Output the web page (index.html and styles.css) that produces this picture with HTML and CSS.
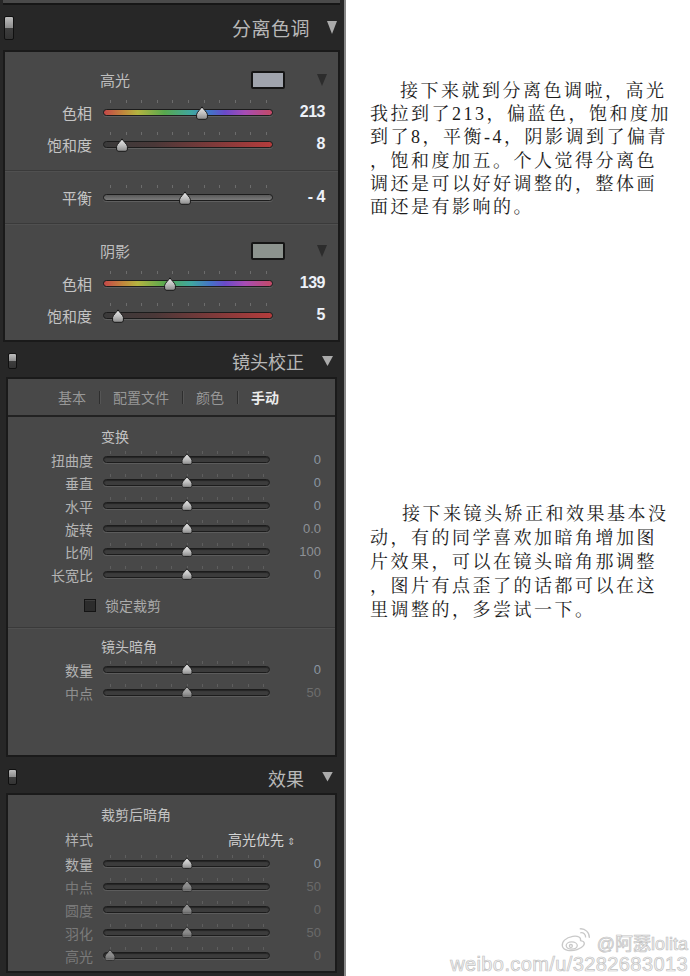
FILE: index.html
```html
<!DOCTYPE html>
<html lang="zh-CN">
<head>
<meta charset="utf-8">
<title>分离色调 / 镜头校正 / 效果</title>
<link rel="stylesheet" href="styles.css">
</head>
<body>
<svg class="defs" width="0" height="0" aria-hidden="true">
  <defs>
    <linearGradient id="tg" x1="0" y1="0" x2="0" y2="1">
      <stop offset="0" stop-color="#ececec"/>
      <stop offset="0.55" stop-color="#bdbdbd"/>
      <stop offset="1" stop-color="#8a8a8a"/>
    </linearGradient>
    <symbol id="th" viewBox="0 0 12 14" preserveAspectRatio="none">
      <path d="M6 0.8 C6.8 2.6 11.2 6.4 11.4 8.4 L11.4 11 C11.4 12.6 10.4 13.3 9 13.3 L3 13.3 C1.6 13.3 0.6 12.6 0.6 11 L0.6 8.4 C0.8 6.4 5.2 2.6 6 0.8 Z" fill="url(#tg)" stroke="#181818" stroke-width="1"/>
    </symbol>
  </defs>
</svg>
<div class="page">
  <aside class="lr">
    <div class="prev"></div>

    <header class="hd hd1"><span class="tog"></span><h2 class="ttl">分离色调</h2><span class="tri"></span></header>
    <div class="pnl p1">
      <div class="sub sa">
        <div class="grp"><span class="gname">高光</span><span class="swatch sw-hi"></span><span class="dtri"></span></div>
        <div class="row r1 first"><span class="lab">色相</span><div class="slider hue hue-hi"><svg class="thumb" style="--p:.592"><use href="#th"/></svg></div><span class="val">213</span></div>
        <div class="row r1"><span class="lab">饱和度</span><div class="slider sat"><svg class="thumb" style="--p:.08"><use href="#th"/></svg></div><span class="val">8</span></div>
      </div>
      <div class="sub sb">
        <div class="row r1"><span class="lab">平衡</span><div class="slider bal"><svg class="thumb" style="--p:.48"><use href="#th"/></svg></div><span class="val">- 4</span></div>
      </div>
      <div class="sub sc">
        <div class="grp"><span class="gname">阴影</span><span class="swatch sw-sh"></span><span class="dtri"></span></div>
        <div class="row r1 first"><span class="lab">色相</span><div class="slider hue"><svg class="thumb" style="--p:.386"><use href="#th"/></svg></div><span class="val">139</span></div>
        <div class="row r1"><span class="lab">饱和度</span><div class="slider sat"><svg class="thumb" style="--p:.05"><use href="#th"/></svg></div><span class="val">5</span></div>
      </div>
    </div>

    <header class="hd hd2"><span class="tog sm"></span><h2 class="ttl">镜头校正</h2><span class="tri sm"></span></header>
    <div class="pnl p2">
      <nav class="tabs">
        <span class="tab">基本</span><span class="sep"></span>
        <span class="tab">配置文件</span><span class="sep"></span>
        <span class="tab">颜色</span><span class="sep"></span>
        <span class="tab on">手动</span>
      </nav>
      <div class="sub st">
        <div class="sh">变换</div>
        <div class="row r2"><span class="lab">扭曲度</span><div class="slider g"><svg class="thumb" style="--p:.5"><use href="#th"/></svg></div><span class="val">0</span></div>
        <div class="row r2"><span class="lab">垂直</span><div class="slider g"><svg class="thumb" style="--p:.5"><use href="#th"/></svg></div><span class="val">0</span></div>
        <div class="row r2"><span class="lab">水平</span><div class="slider g"><svg class="thumb" style="--p:.5"><use href="#th"/></svg></div><span class="val">0</span></div>
        <div class="row r2"><span class="lab">旋转</span><div class="slider g"><svg class="thumb" style="--p:.5"><use href="#th"/></svg></div><span class="val grey">0.0</span></div>
        <div class="row r2"><span class="lab">比例</span><div class="slider g"><svg class="thumb" style="--p:.5"><use href="#th"/></svg></div><span class="val grey">100</span></div>
        <div class="row r2"><span class="lab">长宽比</span><div class="slider g"><svg class="thumb" style="--p:.5"><use href="#th"/></svg></div><span class="val">0</span></div>
        <label class="chk"><span class="box"></span><span class="ctext">锁定裁剪</span></label>
      </div>
      <div class="sub sv">
        <div class="sh">镜头暗角</div>
        <div class="row r2"><span class="lab">数量</span><div class="slider g"><svg class="thumb" style="--p:.5"><use href="#th"/></svg></div><span class="val">0</span></div>
        <div class="row r2 dim"><span class="lab">中点</span><div class="slider g"><svg class="thumb" style="--p:.5"><use href="#th"/></svg></div><span class="val">50</span></div>
      </div>
    </div>

    <header class="hd hd3"><span class="tog sm"></span><h2 class="ttl">效果</h2><span class="tri sm"></span></header>
    <div class="pnl p3">
      <div class="sub se">
        <div class="sh">裁剪后暗角</div>
        <div class="row r2 style"><span class="lab">样式</span><span class="pick">高光优先 <span class="upd">&#8661;</span></span></div>
        <div class="row r2"><span class="lab">数量</span><div class="slider g"><svg class="thumb" style="--p:.5"><use href="#th"/></svg></div><span class="val">0</span></div>
        <div class="row r2 off"><span class="lab">中点</span><div class="slider g"><svg class="thumb" style="--p:.5"><use href="#th"/></svg></div><span class="val">50</span></div>
        <div class="row r2 off"><span class="lab">圆度</span><div class="slider g"><svg class="thumb" style="--p:.5"><use href="#th"/></svg></div><span class="val">0</span></div>
        <div class="row r2 off"><span class="lab">羽化</span><div class="slider g"><svg class="thumb" style="--p:.5"><use href="#th"/></svg></div><span class="val">50</span></div>
        <div class="row r2 off"><span class="lab">高光</span><div class="slider g"><svg class="thumb" style="--p:0"><use href="#th"/></svg></div><span class="val">0</span></div>
      </div>
    </div>
  </aside>

  <main class="notes">
    <p class="note n1">
      <span class="ln">接下来就到分离色调啦，高光</span>
      <span class="ln">我拉到了213，偏蓝色，饱和度加</span>
      <span class="ln">到了8，平衡-4，阴影调到了偏青</span>
      <span class="ln">，饱和度加五。个人觉得分离色</span>
      <span class="ln">调还是可以好好调整的，整体画</span>
      <span class="ln">面还是有影响的。</span>
    </p>
    <p class="note n2">
      <span class="ln">接下来镜头矫正和效果基本没</span>
      <span class="ln">动，有的同学喜欢加暗角增加图</span>
      <span class="ln">片效果，可以在镜头暗角那调整</span>
      <span class="ln">，图片有点歪了的话都可以在这</span>
      <span class="ln">里调整的，多尝试一下。</span>
    </p>
    <div class="wm">
      <div class="wm1">
        <svg class="wb" viewBox="0 0 30 25" width="32" height="27">
          <g fill="none" stroke="#c9c9c9" stroke-width="1.2">
            <path d="M12 9.5 C5 10.5 1.5 15 2.2 18.8 C3 22.8 10 24 16 22 C22 20 24 16.5 22 14.5 C21 13.6 19.4 13.8 19.2 13.4 C20 10.5 17 8.8 12 9.5Z"/>
            <ellipse cx="11" cy="18.2" rx="5.2" ry="3.4"/>
            <circle cx="10.2" cy="18.6" r="1.4"/>
            <path d="M18.5 2.5 A8 8 0 0 1 27.5 11"/>
            <path d="M19 6.2 A4 4 0 0 1 24 10.6"/>
          </g>
        </svg>
        <span>@阿瑟lolita</span>
      </div>
      <div class="wm2">weibo.com/u/3282683013</div>
    </div>
  </main>
</div>
</body>
</html>
```

FILE: styles.css
```css
* { box-sizing: border-box; margin: 0; padding: 0; }

html, body { width: 690px; height: 976px; overflow: hidden; }
body {
  background: #ffffff;
  font-family: "Noto Sans CJK SC", "Noto Sans", sans-serif;
}

.defs { position: absolute; width: 0; height: 0; overflow: hidden; }

.page { display: flex; height: 976px; }

/* ---------- left: Lightroom panel ---------- */
.lr {
  width: 346px;
  flex: none;
  background: #272727;
  border-right: 2px solid #888888;
  display: flex;
  flex-direction: column;
  overflow: hidden;
}

.prev {
  flex: none;
  height: 5px;
  margin: 0 4px 0 3px;
  background: #4a4a4a;
  border-bottom: 2px solid #161616;
}

.hd { display: flex; align-items: center; flex: none; }
.hd1 { height: 45px; padding: 0 7px 0 4px; }
.hd2 { height: 35px; padding: 3px 11px 0 8px; }
.hd3 { height: 36px; padding: 3px 11px 0 8px; }

.tog {
  width: 10px;
  height: 24px;
  border: 1px solid #101010;
  border-radius: 2px;
  background: linear-gradient(#bdbdbd, #8c8c8c 50%, #3e3e3e 50%, #333333);
}
.tog.sm { width: 9px; height: 16px; }

.ttl {
  margin-left: auto;
  font-weight: 400;
  color: #b7b7b7;
  font-size: 18px;
  line-height: 1;
  margin-right: 18px;
}
.hd1 .ttl { font-size: 19px; margin-right: 17px; letter-spacing: 0.5px; }
.hd3 .ttl { padding-top: 3px; }

.tri {
  width: 10px;
  height: 13px;
  background: #ababab;
  clip-path: polygon(0 0, 100% 0, 50% 100%);
}
.tri.sm { width: 11px; height: 10px; }

.pnl {
  flex: none;
  border: 2px solid #1a1a1a;
  background: #484848;
}
.p1 { margin: 0 4px 0 3px; }
.p2 {
  margin: 0 7px 0 6px;
  height: 380px;
  display: flex;
  flex-direction: column;
}
.p3 { margin: 0 7px 0 6px; height: 180px; }

.sub + .sub { border-top: 1px solid #3a3a3a; box-shadow: inset 0 1px 0 #505050; }

/* section 1 */
.sa { padding: 18px 0 10px; }
.sb { padding: 10px 0 10px; }
.sc { padding: 17px 0 9px; }

.grp {
  display: flex;
  align-items: center;
  height: 20px;
  padding-left: 95px;
}
.gname { width: 151px; font-size: 15px; color: #bfbfbf; line-height: 20px; }
.swatch {
  width: 34px;
  height: 18px;
  border: 2px solid #151515;
  border-radius: 2px;
}
.sw-hi { background: #a0a4ad; }
.sw-sh { background: #8c938e; }
.dtri {
  margin-left: 32px;
  width: 10px;
  height: 12px;
  background: #2c2c2c;
  clip-path: polygon(0 0, 100% 0, 50% 100%);
}

.row { display: grid; align-items: center; }
.r1 { grid-template-columns: 98px 170px 52px; height: 32px; }
.r1.first { margin-top: 6px; }
.r2 { grid-template-columns: 95px 167px 51px; height: 23px; }

.lab { text-align: right; white-space: nowrap; }
.r1 .lab { padding-right: 11px; font-size: 15px; color: #c4c4c4; }
.r2 .lab { padding-right: 10px; font-size: 14px; color: #b4b4b4; }

.val {
  text-align: right;
  font-family: "Liberation Sans Narrow", "Liberation Sans", sans-serif;
  white-space: nowrap;
}
.r1 .val { font-size: 16px; font-weight: 700; color: #edf1f8; letter-spacing: -0.5px; }
.r2 .val { font-size: 13px; color: #8b96a2; }
.r2 .val.grey { color: #8e9196; }

/* sliders */
.slider {
  position: relative;
  height: 7px;
  border: 1px solid #1c1c1c;
  border-radius: 4px;
  box-shadow: 0 1px 0 rgba(255, 255, 255, 0.13);
}
.slider::before {
  content: "";
  position: absolute;
  left: 6px;
  right: 5px;
  height: 3px;
  background: repeating-linear-gradient(to right, #6c6c6c 0 1px, transparent 1px calc((100% - 1px) / 10));
}
.r1 .slider::before { top: -10px; }
.r2 .slider::before { top: -6px; background: repeating-linear-gradient(to right, #5e5e5e 0 1px, transparent 1px calc((100% - 1px) / 10)); }

.hue {
  background: linear-gradient(to right, #c44848, #c08a3c 12%, #b4b440 20%, #58a84e 36%, #3fa6a0 52%, #4670c8 64%, #6a4ac8 72%, #a74cb4 84%, #c44a66 100%);
}
.sat { background: linear-gradient(to right, #3a3a3a, #4a3838 30%, #7e3a3a 65%, #b43c3c); }
.bal { background: linear-gradient(#5a5a5a, #7a7a7a); }
.g { background: #3c3c3c; box-shadow: inset 0 1px 1px rgba(0,0,0,0.4), 0 1px 0 #5c5c5c; }

.thumb {
  position: absolute;
  left: calc(6px + var(--p) * (100% - 12px));
  transform: translateX(-50%);
  overflow: visible;
}
.r1 .thumb { top: -4px; width: 12px; height: 14px; }
.r2 .thumb { top: -4px; width: 11px; height: 12px; }

/* section 2 */
.tabs {
  flex: none;
  height: 38px;
  display: flex;
  justify-content: center;
  align-items: center;
  gap: 13px;
  padding-right: 6px;
  border-bottom: 2px solid #222222;
  font-size: 14px;
  color: #979797;
}
.tab.on { color: #ececec; font-weight: 700; }
.sep { width: 1px; height: 13px; background: #2e2e2e; box-shadow: 1px 0 0 #555; }

.st { padding: 8px 0 10px; }
.sv { padding: 7px 0 0; flex: 1; }
.se { padding: 8px 0 0; }

.sh {
  height: 23px;
  line-height: 23px;
  padding-left: 93px;
  font-size: 14px;
  color: #c2c2c2;
}

.chk {
  display: flex;
  align-items: center;
  gap: 9px;
  height: 24px;
  margin-top: 7px;
  padding-left: 76px;
}
.box {
  width: 12px;
  height: 13px;
  background: #2c2c2c;
  border: 1px solid #141414;
  box-shadow: inset 0 1px 0 #3e3e3e;
}
.ctext { font-size: 14px; color: #ababab; }

.dim .lab { color: #8f8f8f; }
.dim .val { color: #6e6e6e; }
.dim .thumb { opacity: 0.75; }

.style { height: 26px; }
.style .lab { color: #b0b0b0; }
.pick {
  grid-column: 2 / 4;
  padding-left: 125px;
  font-size: 14px;
  color: #d4d4d4;
  white-space: nowrap;
}
.upd { font-size: 10px; color: #bcbcbc; }

.off .lab { color: #7a7a7a; }
.off .val { color: #6a6a6a; }
.off .thumb { opacity: 0.6; }

/* ---------- right: notes ---------- */
.notes {
  flex: 1;
  position: relative;
  padding: 80px 0 0 24px;
  font-family: "Liberation Serif", "Noto Serif CJK SC", "Noto Sans CJK SC", serif;
  font-size: 18px;
  letter-spacing: 2.5px;
  color: #1c1c1c;
}
.note .ln { display: block; white-space: nowrap; }
.n1 { line-height: 23.2px; }
.n1 .ln:first-child { padding-left: 30px; }
.n2 { line-height: 24px; margin-top: 283px; }
.n2 .ln:first-child { padding-left: 32px; }

.wm {
  position: absolute;
  right: 2px;
  bottom: 1px;
  text-align: right;
  font-family: "Liberation Sans", "Noto Sans CJK SC", sans-serif;
  color: #f6f6f6;
  -webkit-text-stroke: 0.7px #c2c2c2;
  letter-spacing: 0;
}
.wm1 {
  display: flex;
  justify-content: flex-end;
  align-items: flex-end;
  gap: 5px;
  font-size: 18px;
  line-height: 20px;
}
.wb { flex: none; margin-bottom: 1px; }
.wm2 { font-size: 20px; line-height: 21px; letter-spacing: 0.4px; }
```
